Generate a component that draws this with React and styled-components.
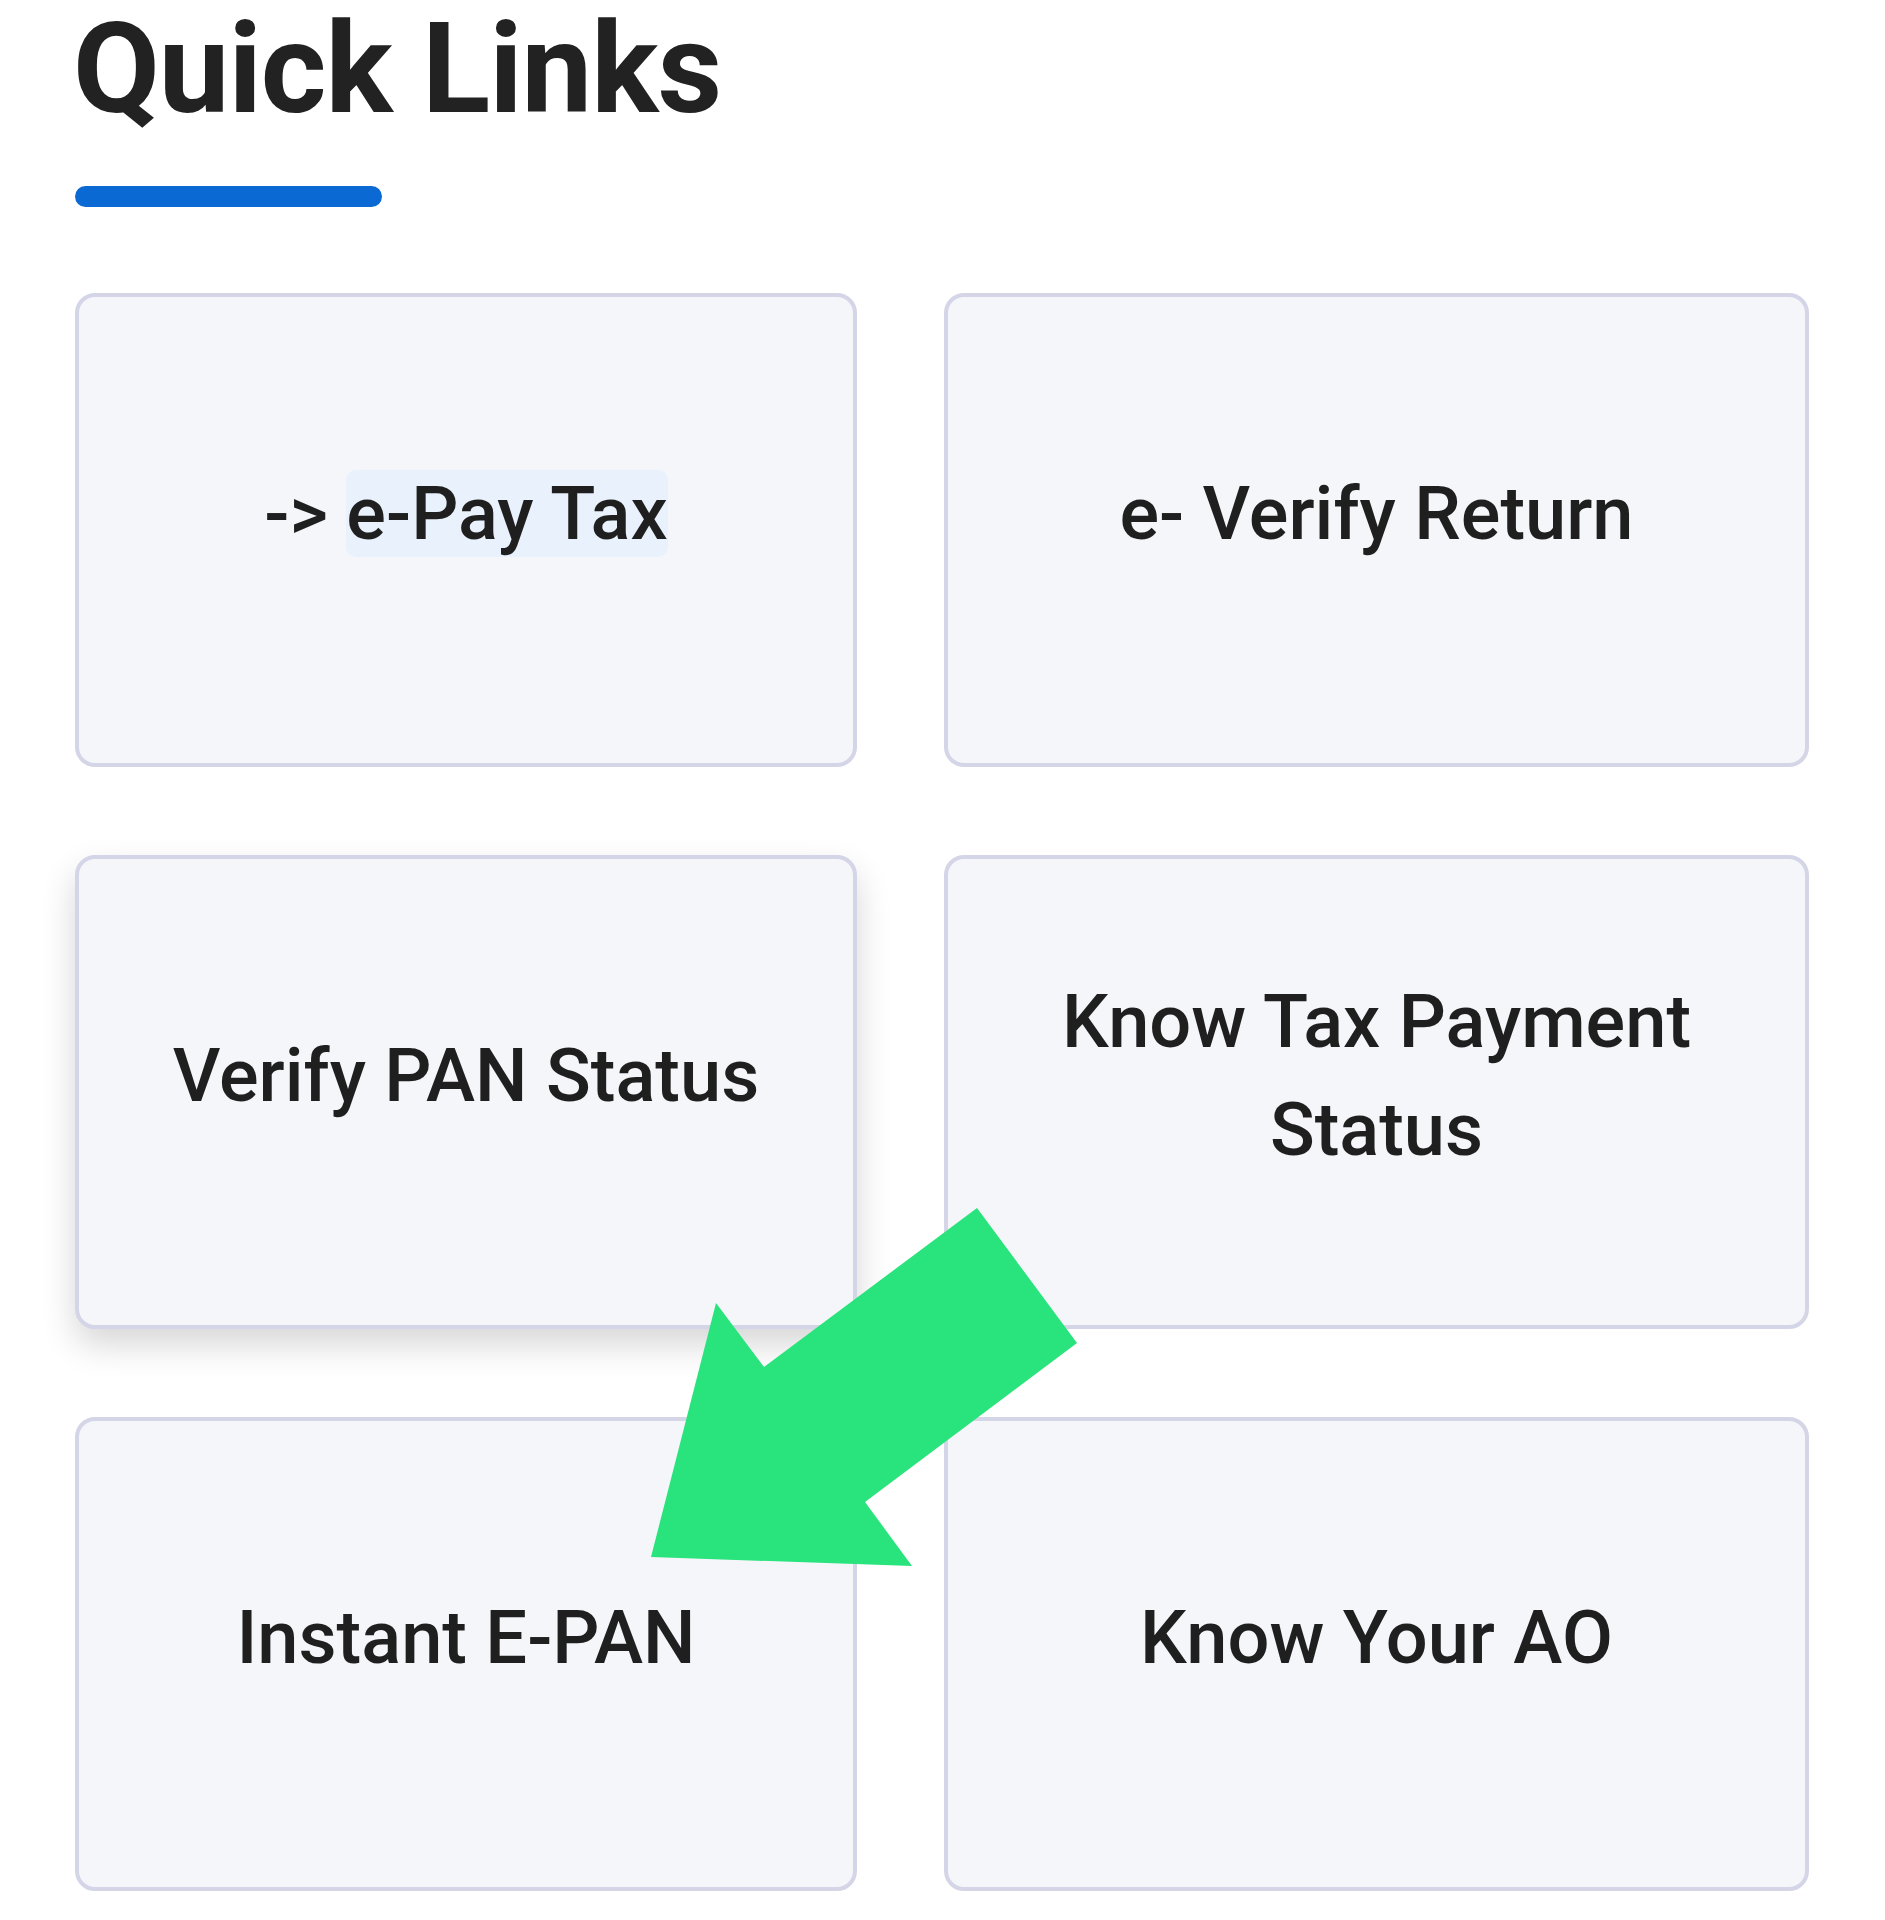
import React from "react"
import styled, { createGlobalStyle } from "styled-components"

const GlobalStyle = createGlobalStyle`
  html, body {
    margin: 0;
    padding: 0;
    background: #ffffff;
  }
  body {
    font-family: Roboto, "Liberation Sans", Arial, sans-serif;
  }
`

const Page = styled.div`
  position: relative;
  min-height: 1920px;
  box-sizing: border-box;
  padding: 0 0 0 75px;
`

const Title = styled.h1`
  margin: 0 0 0 -2px;
  font-size: 126px;
  line-height: 138px;
  font-weight: 700;
  color: #222222;
  letter-spacing: -1px;
`

const Underline = styled.div`
  width: 307px;
  height: 21px;
  margin-top: 48px;
  border-radius: 11px;
  background: #0a69d2;
`

const Grid = styled.div`
  display: grid;
  grid-template-columns: 782px 865px;
  grid-auto-rows: 474px;
  column-gap: 87px;
  row-gap: 88px;
  margin-top: 86px;
`

const Card = styled.a`
  display: flex;
  align-items: center;
  justify-content: center;
  box-sizing: border-box;
  padding: 10px 40px 42px;
  border: 4px solid #d4d6e8;
  border-radius: 20px;
  background: #f5f6fa;
  text-align: center;
  text-decoration: none;
  color: #1f1f1f;
  font-size: 74px;
  font-weight: 500;
  line-height: 108px;
  box-shadow: ${({ $raised }) =>
    $raised ? "0 16px 34px rgba(0, 0, 0, 0.16)" : "none"};
`

const Highlight = styled.span`
  background: #e8f1fc;
  border-radius: 10px;
`

const Arrow = styled.svg`
  position: absolute;
  left: 645px;
  top: 1200px;
  width: 440px;
  height: 372px;
  pointer-events: none;
`

const links = [
  { id: "pay", label: "e-Pay Tax", prefix: "-> " },
  { id: "verify", label: "e- Verify Return" },
  { id: "pan", label: "Verify PAN Status", raised: true },
  { id: "status", label: "Know Tax Payment Status" },
  { id: "epan", label: "Instant E-PAN" },
  { id: "ao", label: "Know Your AO" },
]

export default function App() {
  return (
    <>
      <GlobalStyle />
      <Page>
        <Title>Quick Links</Title>
        <Underline />
        <Grid>
          {links.map(link => (
            <Card key={link.id} $raised={link.raised}>
              <span>
                {link.prefix ? (
                  <>
                    {link.prefix}
                    <Highlight>{link.label}</Highlight>
                  </>
                ) : (
                  link.label
                )}
              </span>
            </Card>
          ))}
        </Grid>
        <Arrow viewBox="0 0 440 372">
          <polygon
            points="332,8 432,143 220,302 267,366 6,357 71,103 119,167"
            fill="#29e37d"
          />
        </Arrow>
      </Page>
    </>
  )
}
